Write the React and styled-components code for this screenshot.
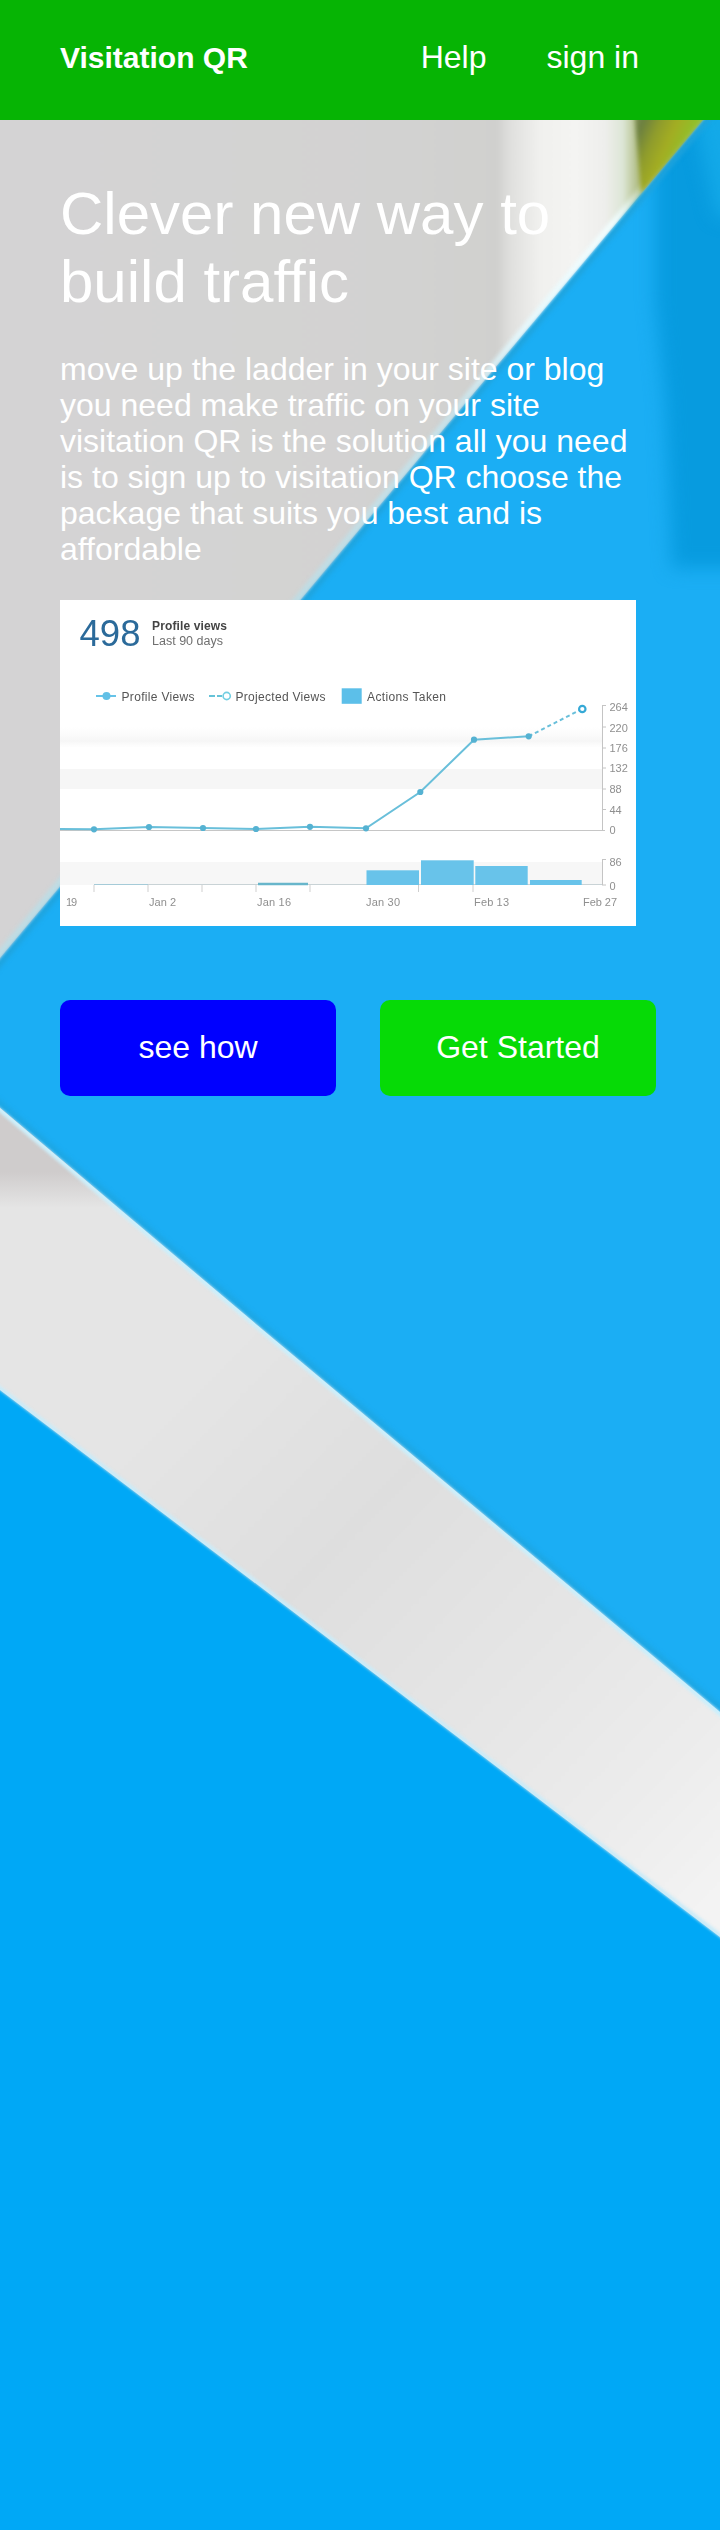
import React from "react";
import styled, { createGlobalStyle } from "styled-components";

const GlobalStyle = createGlobalStyle`
  * { box-sizing: border-box; }
  body {
    margin: 0;
    font-family: "Liberation Sans", Arial, sans-serif;
    color: #fff;
  }
`;

const Page = styled.div`
  width: 720px;
  height: 2530px;
  display: flex;
  flex-direction: column;
  overflow: hidden;
`;

const Header = styled.header`
  flex: none;
  height: 120px;
  padding: 39px 81px 0 60px;
  display: flex;
  justify-content: space-between;
  align-items: flex-start;
  background: #06b404;
`;

const Logo = styled.h1`
  margin: 0;
  padding-top: 1px;
  font-size: 30px;
  line-height: 36px;
  font-weight: bold;
`;

const Nav = styled.nav`
  display: flex;
  gap: 60px;
`;

const NavLink = styled.a`
  font-size: 32px;
  line-height: 36px;
  color: #fff;
  text-decoration: none;
`;

const Hero = styled.main`
  flex: 1;
  display: grid;
  grid-template: 1fr / 1fr;
`;

const Backdrop = styled.svg`
  grid-area: 1 / 1;
  display: block;
  width: 720px;
  height: 2410px;

  filter {
    color-interpolation-filters: sRGB;
  }
`;

const Content = styled.div`
  grid-area: 1 / 1;
  z-index: 1;
  padding: 60px 60px 0;
  display: flex;
  flex-direction: column;
  align-items: flex-start;
`;

const Title = styled.h2`
  margin: 0 0 35px;
  font-size: 60px;
  line-height: 68px;
  font-weight: normal;
`;

const Lead = styled.p`
  margin: 0 0 33px;
  width: 576px;
  font-size: 32px;
  line-height: 36px;
`;

const ChartCard = styled.figure`
  margin: 0 0 74px;
  width: 576px;
  height: 326px;
  background: #fff;
  overflow: hidden;
`;

const Chart = styled.svg`
  display: block;
  font-size: 11.5px;

  filter {
    color-interpolation-filters: sRGB;
  }
`;

const Actions = styled.div`
  display: flex;
  gap: 44px;
`;

const Button = styled.button`
  width: 276px;
  height: 96px;
  padding: 0 0 2px;
  border: 0;
  border-radius: 10px;
  font: 32px/36px "Liberation Sans", Arial, sans-serif;
  color: #fff;
  background: ${(p) => p.$color};
`;

const WEDGE = "M-20 100 H720 L703 120 L0 958 L-20 982 Z";
const BAND = "M-20 1091 L0 1108 L263 1330 L720 1712 L740 1729 V1952 L720 1937 L275 1598 L0 1390 L-20 1375 Z";

function HeroBackdrop() {
  return (
    <Backdrop viewBox="0 120 720 2410" aria-hidden="true">
      <defs>
        <linearGradient id="wall" gradientUnits="userSpaceOnUse" x1="0" y1="0" x2="720" y2="0">
          <stop offset="0" stopColor="#d4d3d4" />
          <stop offset="0.55" stopColor="#d2d2d1" />
          <stop offset="0.69" stopColor="#d0d0ce" />
          <stop offset="0.71" stopColor="#e0e0de" />
          <stop offset="0.75" stopColor="#f0f0ee" />
          <stop offset="0.8" stopColor="#f4f4f2" />
          <stop offset="0.84" stopColor="#eeeeec" />
          <stop offset="0.865" stopColor="#dce6d6" />
          <stop offset="0.885" stopColor="#b4c08a" />
        </linearGradient>
        <linearGradient id="leaf" gradientUnits="userSpaceOnUse" x1="634" y1="120" x2="690" y2="145">
          <stop offset="0" stopColor="#7b8a52" />
          <stop offset="0.15" stopColor="#6c8040" />
          <stop offset="0.4" stopColor="#8f9c2c" />
          <stop offset="0.65" stopColor="#a3ad22" />
          <stop offset="1" stopColor="#8dc32a" />
        </linearGradient>
        <linearGradient id="band" gradientUnits="userSpaceOnUse" x1="0" y1="1200" x2="720" y2="1900">
          <stop offset="0" stopColor="#e5e5e5" />
          <stop offset="0.25" stopColor="#e5e5e5" />
          <stop offset="0.48" stopColor="#dedede" />
          <stop offset="0.72" stopColor="#e6e6e6" />
          <stop offset="0.87" stopColor="#ececec" />
          <stop offset="1" stopColor="#f3f3f3" />
        </linearGradient>
        <linearGradient id="bandShade" gradientUnits="userSpaceOnUse" x1="0" y1="1172" x2="0" y2="1208">
          <stop offset="0" stopColor="#cfcccc" />
          <stop offset="1" stopColor="#cfcccc" stopOpacity="0" />
        </linearGradient>
        <linearGradient id="sheen" gradientUnits="userSpaceOnUse" x1="703" y1="120" x2="300" y2="600">
          <stop offset="0.12" stopColor="#e0f8ff" stopOpacity="0" />
          <stop offset="0.22" stopColor="#f2feff" />
          <stop offset="0.45" stopColor="#e4f8fd" />
          <stop offset="0.6" stopColor="#c8e4ec" />
          <stop offset="1" stopColor="#bcdde6" />
        </linearGradient>
        <filter id="soft1" x="-10%" y="-10%" width="120%" height="120%"><feGaussianBlur stdDeviation="1.8" /></filter>
        <filter id="soft3" x="-10%" y="-10%" width="120%" height="120%"><feGaussianBlur stdDeviation="2.2" /></filter>
        <filter id="soft8" x="-60%" y="-20%" width="220%" height="140%"><feGaussianBlur stdDeviation="9" /></filter>
        <clipPath id="bandClip"><path d={BAND} /></clipPath>
        <clipPath id="wedgeClip"><path d={WEDGE} /></clipPath>
      </defs>

      <rect x="0" y="120" width="720" height="2410" fill="#1baef4" />

      <path d="M655 100 H760 V568 H672 L665 400 L655 300 Z" fill="#079bdf" filter="url(#soft8)" />
      <path d="M690 100 H760 V225 L716 215 Z" fill="#13a9e8" filter="url(#soft8)" />

      <path d="M720 100 L703 120 L0 958 L-20 982" transform="translate(3 2)" fill="none" stroke="#1fa3dc" strokeWidth="5" filter="url(#soft3)" />
      <path d="M-20 1091 L0 1108 L263 1330 L720 1712 L740 1729" transform="translate(2 -3)" fill="none" stroke="#1da6e2" strokeWidth="5" filter="url(#soft3)" />

      <g filter="url(#soft1)">
        <path d="M-20 1375 L0 1390 L275 1598 L720 1937 L740 1952 V2560 H-20 Z" fill="#00a8f6" />
        <path d={WEDGE} fill="url(#wall)" />
        <path d={BAND} fill="url(#band)" />
      </g>

      <g clipPath="url(#wedgeClip)">
        <path d="M720 100 L703 120 L0 958 L-20 982" transform="translate(-2 -2)" fill="none" stroke="url(#sheen)" strokeWidth="6" filter="url(#soft3)" />
        <path d="M633 90 H728 L703 120 L641 194 Z" fill="url(#leaf)" filter="url(#soft3)" />
      </g>

      <g clipPath="url(#bandClip)">
        <rect x="-10" y="1080" width="130" height="132" fill="url(#bandShade)" />
        <path d="M-20 1091 L0 1108 L263 1330 L720 1712 L740 1729" fill="none" stroke="#cdf0fc" strokeWidth="7" filter="url(#soft1)" />
        <path d="M-20 1375 L0 1390 L275 1598 L720 1937 L740 1952" fill="none" stroke="#cdecf8" strokeWidth="7" filter="url(#soft1)" />
      </g>
    </Backdrop>
  );
}

const POINTS = [
  [34, 229.3], [89, 227], [143, 228], [196, 229], [250, 226.8],
  [306, 228.3], [360.3, 192], [414, 139.7], [468.7, 136.3],
];
const BARS = [
  [306.5, 270.3, 52.5], [361, 260.3, 52.7], [415.3, 266, 52.4], [470, 280, 51.7],
];
const SCALE = [["264", 107], ["220", 127.5], ["176", 148], ["132", 168], ["88", 189], ["44", 209.5], ["0", 230]];
const DATES = [["19", 6, 11], ["Jan 2", 89, 27], ["Jan 16", 197, 34], ["Jan 30", 306, 34], ["Feb 13", 414, 35], ["Feb 27", 523, 34]];
const TICKS = [34, 88, 142, 196, 250, 358.5, 413];

function ProfileViewsChart() {
  return (
    <Chart width="576" height="326" viewBox="0 0 576 326" role="img" aria-label="Profile views">
      <defs>
        <linearGradient id="stripe" x1="0" y1="0" x2="0" y2="1">
          <stop offset="0" stopColor="#f9f9f9" stopOpacity="0" />
          <stop offset="0.7" stopColor="#f6f6f6" />
          <stop offset="1" stopColor="#f9f9f9" stopOpacity="0.2" />
        </linearGradient>
        <filter id="photo" x="0" y="0" width="100%" height="100%"><feGaussianBlur stdDeviation="0.65" /></filter>
      </defs>
      <rect width="576" height="326" fill="#fff" />
      <g filter="url(#photo)">
        <rect width="576" height="326" fill="#fff" />
        <rect y="127" width="542" height="20" fill="url(#stripe)" />
        <rect y="169" width="542" height="20" fill="#f6f6f6" />
        <rect y="262" width="542" height="23" fill="#f7f7f7" />

        <text x="19.5" y="46" fontSize="36.5" fill="#2b6a9a" textLength="61">498</text>
        <text x="92" y="30" fontSize="12" fontWeight="bold" fill="#444" textLength="75">Profile views</text>
        <text x="92" y="45" fontSize="12.5" fill="#6f6f6f" textLength="71">Last 90 days</text>

        <g fill="#555" fontSize="12">
          <text x="61.5" y="100.5" textLength="73">Profile Views</text>
          <text x="175.5" y="100.5" textLength="90">Projected Views</text>
          <text x="307" y="100.5" textLength="79">Actions Taken</text>
        </g>
        <path d="M36 96 H56" stroke="#66c3e8" strokeWidth="2" />
        <circle cx="46.5" cy="96" r="4" fill="#62c0e6" />
        <path d="M149 96 H155 M157 96 H162" stroke="#66c3d8" strokeWidth="2" />
        <circle cx="166.7" cy="96" r="3.6" fill="#fff" stroke="#72cfe2" strokeWidth="1.6" />
        <rect x="281.7" y="88.3" width="20" height="15.5" fill="#5cbfe9" />

        <path d="M0 230.5 H545" stroke="#c6c6c6" />
        <path d="M542.5 105 V230.5 M542.5 259 V285" fill="none" stroke="#c4c4c4" />
        <path d="M542 105.5 H546 M542 127 H546 M542 148 H546 M542 168 H546 M542 189 H546 M542 209.5 H546 M542 259.5 H546 M542 285 H546" stroke="#c4c4c4" />
        <path d="M34 284.5 H542" stroke="#c9d3d6" />
        <path d="M34 284.5 H88" stroke="#a5cbd8" strokeWidth="1.2" />
        <path d="M198 284 H248" stroke="#68b6cb" strokeWidth="2.5" />
        {TICKS.map((x) => <path key={x} d={`M${x} 285 V292`} stroke="#cfcfcf" />)}
        {BARS.map(([x, y, w]) => <rect key={x} x={x} y={y} width={w} height={285 - y} fill="#68c3ea" />)}

        <polyline points={"0,229 " + POINTS.map((p) => p.join(",")).join(" ")} fill="none" stroke="#69bfda" strokeWidth="2" />
        <path d="M468.7 136.3 L520 110" stroke="#69bfda" strokeWidth="2" strokeDasharray="4 3" />
        {POINTS.map(([x, y]) => <circle key={x} cx={x} cy={y} r="3.1" fill="#55b2d2" />)}
        <circle cx="522.3" cy="109" r="3.2" fill="#fff" stroke="#36a9d6" strokeWidth="2.2" />

        <g fill="#8f8f8f" fontSize="11">
          {SCALE.map(([label, y]) => <text key={label} x="549.5" y={y + 4}>{label}</text>)}
          <text x="549.5" y="265.5">86</text>
          <text x="549.5" y="289.5">0</text>
          {DATES.map(([label, x, w]) => <text key={label} x={x} y="305.5" textLength={w}>{label}</text>)}
        </g>
      </g>
    </Chart>
  );
}

export default function App() {
  return (
    <Page>
      <GlobalStyle />
      <Header>
        <Logo>Visitation QR</Logo>
        <Nav>
          <NavLink>Help</NavLink>
          <NavLink>sign in</NavLink>
        </Nav>
      </Header>
      <Hero>
        <HeroBackdrop />
        <Content>
          <Title>Clever new way to build traffic</Title>
          <Lead>
            move up the ladder in your site or blog you need make traffic on your site visitation QR is
            the solution all you need is to sign up to visitation QR choose the package that suits you
            best and is affordable
          </Lead>
          <ChartCard>
            <ProfileViewsChart />
          </ChartCard>
          <Actions>
            <Button $color="#0000ff">see how</Button>
            <Button $color="#06da06">Get Started</Button>
          </Actions>
        </Content>
      </Hero>
    </Page>
  );
}
